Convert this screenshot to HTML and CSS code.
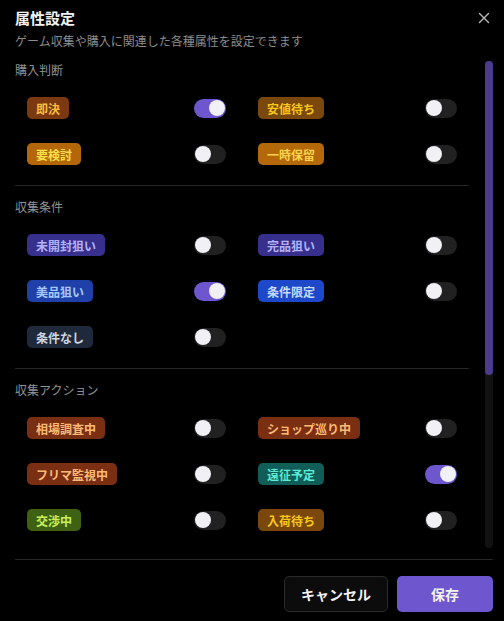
FILE: index.html
```html
<!DOCTYPE html>
<html lang="ja">
<head>
<meta charset="utf-8">
<title>属性設定</title>
<link rel="stylesheet" href="styles.css">
</head>
<body>
<div class="dialog">
  <header class="header">
    <div class="title-row">
      <h1 class="title">属性設定</h1>
      <button class="close" aria-label="閉じる">
        <svg width="12" height="12" viewBox="0 0 12 12"><path d="M1.5 1.5L10.5 10.5M10.5 1.5L1.5 10.5" stroke="#b8b8b8" stroke-width="1.4" stroke-linecap="round" fill="none"/></svg>
      </button>
    </div>
    <p class="subtitle">ゲーム収集や購入に関連した各種属性を設定できます</p>
  </header>

  <div class="body">
    <div class="content">
      <section class="section">
        <h2 class="section-title">購入判断</h2>
        <div class="grid">
          <div class="item"><span class="badge b-orange">即決</span><span class="toggle on"></span></div>
          <div class="item"><span class="badge b-amber">安値待ち</span><span class="toggle"></span></div>
          <div class="item"><span class="badge b-amber-light">要検討</span><span class="toggle"></span></div>
          <div class="item"><span class="badge b-amber-light2">一時保留</span><span class="toggle"></span></div>
        </div>
      </section>

      <section class="section">
        <h2 class="section-title">収集条件</h2>
        <div class="grid">
          <div class="item"><span class="badge b-indigo">未開封狙い</span><span class="toggle"></span></div>
          <div class="item"><span class="badge b-indigo">完品狙い</span><span class="toggle"></span></div>
          <div class="item"><span class="badge b-blue">美品狙い</span><span class="toggle on"></span></div>
          <div class="item"><span class="badge b-blue-light">条件限定</span><span class="toggle"></span></div>
          <div class="item"><span class="badge b-slate">条件なし</span><span class="toggle"></span></div>
        </div>
      </section>

      <section class="section">
        <h2 class="section-title">収集アクション</h2>
        <div class="grid">
          <div class="item"><span class="badge b-rust">相場調査中</span><span class="toggle"></span></div>
          <div class="item"><span class="badge b-rust">ショップ巡り中</span><span class="toggle"></span></div>
          <div class="item"><span class="badge b-rust">フリマ監視中</span><span class="toggle"></span></div>
          <div class="item"><span class="badge b-teal">遠征予定</span><span class="toggle on"></span></div>
          <div class="item"><span class="badge b-lime">交渉中</span><span class="toggle"></span></div>
          <div class="item"><span class="badge b-amber">入荷待ち</span><span class="toggle"></span></div>
        </div>
      </section>
    </div>
    <div class="scrollbar"><div class="thumb" style="height: 64.5%"></div></div>
  </div>

  <footer class="footer">
    <button class="btn btn-cancel">キャンセル</button>
    <button class="btn btn-save">保存</button>
  </footer>
</div>
</body>
</html>
```

FILE: styles.css
```css
* { box-sizing: border-box; }

html, body {
  margin: 0;
  padding: 0;
  background: #000;
}

body {
  font-family: "Noto Sans CJK JP", "Noto Sans", sans-serif;
  color: #eee;
}

.dialog {
  width: 504px;
  height: 621px;
  display: flex;
  flex-direction: column;
  padding: 8px 11px 9px 15px;
  background: #000;
}

.header { flex: none; }

.title-row {
  display: flex;
  align-items: center;
  justify-content: space-between;
}

.title {
  margin: 0;
  font-size: 15px;
  line-height: 20px;
  font-weight: 700;
  color: #f2f2f2;
}

.close {
  background: none;
  border: 0;
  padding: 0;
  margin-right: 3px;
  width: 12px;
  height: 12px;
  display: flex;
  cursor: pointer;
}

.subtitle {
  margin: 5px 0 0;
  font-size: 12px;
  line-height: 16px;
  color: #8c8c8c;
}

.body {
  flex: none;
  height: 487px;
  margin-top: 12px;
  display: flex;
  gap: 16px;
}

.content {
  flex: 1;
  min-width: 0;
  overflow: hidden;
}

.scrollbar {
  flex: none;
  width: 8px;
  height: 100%;
  background: #121212;
  border-radius: 4px;
}

.thumb {
  width: 100%;
  background: #4b3a8e;
  border-radius: 4px;
}

.section + .section {
  border-top: 1px solid #262626;
  padding-top: 12px;
}

.section-title {
  margin: 0;
  font-size: 12px;
  line-height: 18px;
  font-weight: 400;
  color: #939393;
}

.grid {
  display: grid;
  grid-template-columns: 1fr 1fr;
  column-gap: 32px;
  row-gap: 24px;
  padding: 18px 12px 20px;
}

.item {
  display: flex;
  align-items: center;
  justify-content: space-between;
  height: 22px;
}

.badge {
  display: inline-flex;
  align-items: center;
  height: 22px;
  padding: 0 9px;
  border-radius: 5px;
  font-size: 12px;
  font-weight: 700;
  white-space: nowrap;
}

.b-orange { background: #7c3810; color: #fbbf3c; }
.b-amber { background: #7a470c; color: #f7c81a; }
.b-amber-light { background: #b3670a; color: #fde047; }
.b-amber-light2 { background: #b3690a; color: #fdd34d; }
.b-indigo { background: #372f8c; color: #b3b2fa; }
.b-blue { background: #1e40a8; color: #a5c8fd; }
.b-blue-light { background: #1d48c9; color: #c3dafe; }
.b-slate { background: #1e293b; color: #cfd6e0; }
.b-rust { background: #7a2e12; color: #fdba74; }
.b-teal { background: #115e59; color: #5eead4; }
.b-lime { background: #3f6212; color: #c5f05a; }

.toggle {
  position: relative;
  width: 32px;
  height: 19px;
  border-radius: 10px;
  background: #212121;
  flex: none;
}

.toggle::after {
  content: "";
  position: absolute;
  top: 1.5px;
  left: 1px;
  width: 16px;
  height: 16px;
  border-radius: 50%;
  background: #f0f0f5;
}

.toggle.on { background: #6e56cf; }
.toggle.on::after { left: 15px; }

.footer {
  flex: none;
  margin-top: 11px;
  border-top: 1px solid #262626;
  padding-top: 16px;
  display: flex;
  justify-content: flex-end;
  gap: 9px;
}

.btn {
  height: 36px;
  border-radius: 5px;
  font-family: inherit;
  font-size: 14px;
  font-weight: 700;
  color: #f2f2f2;
  cursor: pointer;
}

.btn-cancel {
  width: 104px;
  background: #0c0c0c;
  border: 1px solid #2a2a2a;
}

.btn-save {
  width: 96px;
  background: #6e56cf;
  border: 0;
}
```
